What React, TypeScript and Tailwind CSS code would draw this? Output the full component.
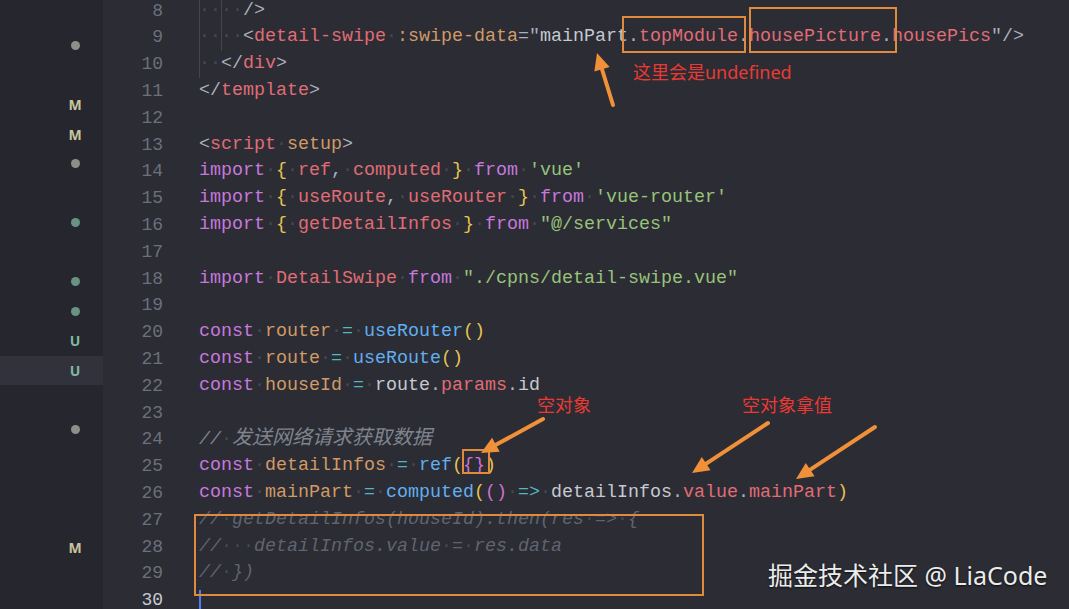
type Tok = [string, string];

const colors: Record<string, string> = {
  g: "text-[#a9afbb]",
  w: "text-[#c5c9d1]",
  r: "text-[#e06c75]",
  o: "text-[#d19a66]",
  k: "text-[#c678dd]",
  b: "text-[#61afef]",
  c: "text-[#56b6c2]",
  s: "text-[#98c379]",
  y: "text-[#e5c451]",
  m: "text-[#d070d0]",
  cm: "text-[#7f848e] italic",
  cd: "text-[#60646f] italic",
  zh: "text-[#7f848e] italic text-[20px]",
};

const code: Tok[][] = [
  [["IND", ""], ["IND", ""], ["/>", "g"]],
  [["IND", ""], ["IND", ""], ["<", "g"], ["detail-swipe", "r"], [" ", ""], [":swipe-data", "o"], ["=\"", "g"], ["mainPart", "w"], [".", "g"], ["topModule", "r"], [".", "g"], ["housePicture", "r"], [".", "g"], ["housePics", "r"], ["\"/>", "g"]],
  [["IND", ""], ["</", "g"], ["div", "r"], [">", "g"]],
  [["</", "g"], ["template", "r"], [">", "g"]],
  [],
  [["<", "g"], ["script", "r"], [" ", ""], ["setup", "o"], [">", "g"]],
  [["import", "k"], [" ", ""], ["{", "y"], [" ", ""], ["ref", "r"], [",", "g"], [" ", ""], ["computed", "r"], [" ", ""], ["}", "y"], [" ", ""], ["from", "k"], [" ", ""], ["'vue'", "s"]],
  [["import", "k"], [" ", ""], ["{", "y"], [" ", ""], ["useRoute", "r"], [",", "g"], [" ", ""], ["useRouter", "r"], [" ", ""], ["}", "y"], [" ", ""], ["from", "k"], [" ", ""], ["'vue-router'", "s"]],
  [["import", "k"], [" ", ""], ["{", "y"], [" ", ""], ["getDetailInfos", "r"], [" ", ""], ["}", "y"], [" ", ""], ["from", "k"], [" ", ""], ["\"@/services\"", "s"]],
  [],
  [["import", "k"], [" ", ""], ["DetailSwipe", "r"], [" ", ""], ["from", "k"], [" ", ""], ["\"./cpns/detail-swipe.vue\"", "s"]],
  [],
  [["const", "k"], [" ", ""], ["router", "o"], [" ", ""], ["=", "c"], [" ", ""], ["useRouter", "b"], ["()", "y"]],
  [["const", "k"], [" ", ""], ["route", "o"], [" ", ""], ["=", "c"], [" ", ""], ["useRoute", "b"], ["()", "y"]],
  [["const", "k"], [" ", ""], ["houseId", "o"], [" ", ""], ["=", "c"], [" ", ""], ["route", "w"], [".", "g"], ["params", "r"], [".", "g"], ["id", "w"]],
  [],
  [["//", "cm"], [" ", ""], ["发送网络请求获取数据", "zh"]],
  [["const", "k"], [" ", ""], ["detailInfos", "o"], [" ", ""], ["=", "c"], [" ", ""], ["ref", "b"], ["(", "y"], ["{}", "m"], [")", "y"]],
  [["const", "k"], [" ", ""], ["mainPart", "o"], [" ", ""], ["=", "c"], [" ", ""], ["computed", "b"], ["(", "y"], ["()", "m"], [" ", ""], ["=>", "c"], [" ", ""], ["detailInfos", "w"], [".", "g"], ["value", "r"], [".", "g"], ["mainPart", "r"], [")", "y"]],
  [["//", "cd"], [" ", ""], ["getDetailInfos(houseId).then(res", "cd"], [" ", ""], ["=>", "cd"], [" ", ""], ["{", "cd"]],
  [["//", "cd"], ["   ", ""], ["detailInfos.value", "cd"], [" ", ""], ["=", "cd"], [" ", ""], ["res.data", "cd"]],
  [["//", "cd"], [" ", ""], ["})", "cd"]],
  [],
];

const side: (null | "dot" | "gdot" | "M" | "U")[] = [
  "dot", null, "M", "M", "dot", null, "gdot", null, "gdot", "gdot", "U", "U", null, "dot", null, null, null, "M",
];

function Token({ t }: { t: Tok }) {
  if (t[0] === "IND") {
    return (
      <span className="inline-block w-[22px] shadow-[inset_1px_0_0_#42454f] text-[#464953]">··</span>
    );
  }
  if (t[1] === "") {
    return <span className="text-[#464953]">{"·".repeat(t[0].length)}</span>;
  }
  return <span className={colors[t[1]]}>{t[0]}</span>;
}

function Arrow({ x1, y1, x2, y2 }: { x1: number; y1: number; x2: number; y2: number }) {
  const len = Math.hypot(x2 - x1, y2 - y1);
  const dx = (x2 - x1) / len;
  const dy = (y2 - y1) / len;
  const bx = x2 - dx * 17;
  const by = y2 - dy * 17;
  const px = -dy * 8;
  const py = dx * 8;
  return (
    <g>
      <line x1={x1} y1={y1} x2={bx} y2={by} stroke="#f0913a" strokeWidth={4} strokeLinecap="round" />
      <polygon points={`${x2},${y2} ${bx + px},${by + py} ${bx - px},${by - py}`} fill="#f0913a" />
    </g>
  );
}

export default function App() {
  return (
    <div className="relative w-[1069px] h-[609px] overflow-hidden bg-[#2b2c34] flex font-['Liberation_Mono','Noto_Sans_CJK_SC',monospace]">
      {/* explorer strip */}
      <div className="w-[103px] shrink-0 h-full bg-[#25262e] pt-[31px] font-['Noto_Sans',sans-serif]">
        {side.map((s, i) => (
          <div
            key={i}
            className={`h-[29.5px] flex items-center justify-end pr-[20px] ${i === 11 ? "bg-[#31323c]" : ""}`}
          >
            <div className="w-4 flex justify-center">
              {s === "dot" && <span className="w-[9px] h-[9px] rounded-full bg-[#8f8e86]" />}
              {s === "gdot" && <span className="w-[9px] h-[9px] rounded-full bg-[#6a9283]" />}
              {s === "M" && <span className="text-[14px] font-bold text-[#c9c39c]">M</span>}
              {s === "U" && <span className="text-[14px] font-bold text-[#7fb8a1]">U</span>}
            </div>
          </div>
        ))}
      </div>

      {/* gutter */}
      <div className="w-[96px] shrink-0 mt-[-2.4px] pr-[36px] text-right text-[18px] leading-[26.8px] text-[#6c707b]">
        {code.map((_, i) => (
          <div key={i} className={i + 8 === 30 ? "text-[#c8cad0]" : ""}>
            {i + 8}
          </div>
        ))}
      </div>

      {/* code */}
      <div className="flex-1 mt-[-2.4px] text-[18.33px] leading-[26.8px] whitespace-pre">
        {code.map((line, i) => (
          <div key={i} className="relative h-[26.8px]">
            {line.map((t, j) => (
              <Token key={j} t={t} />
            ))}
            {i === 22 && <span className="absolute left-0 top-[3px] w-[2px] h-[24px] bg-[#4f7ef0]" />}
          </div>
        ))}
      </div>

      {/* annotations */}
      <div className="absolute left-[622px] top-[16px] w-[124px] h-[37px] border-2 border-[#e08a3e]" />
      <div className="absolute left-[749px] top-[7px] w-[148px] h-[46px] border-2 border-[#e08a3e]" />
      <div className="absolute left-[462px] top-[449px] w-[28px] h-[25px] border-2 border-[#e08a3e]" />
      <div className="absolute left-[194px] top-[514px] w-[510px] h-[82px] border-2 border-[#e08a3e]" />

      <div className="absolute left-[633px] top-[59px] text-[18px] leading-[26px] text-[#ea3a33] font-['Noto_Sans','Noto_Sans_CJK_SC',sans-serif]">
        这里会是undefined
      </div>
      <div className="absolute left-[537px] top-[392px] text-[18px] leading-[26px] text-[#ea3a33] font-['Noto_Sans','Noto_Sans_CJK_SC',sans-serif]">
        空对象
      </div>
      <div className="absolute left-[742px] top-[392px] text-[18px] leading-[26px] text-[#ea3a33] font-['Noto_Sans','Noto_Sans_CJK_SC',sans-serif]">
        空对象拿值
      </div>

      <svg className="absolute inset-0 pointer-events-none" width={1069} height={609}>
        <Arrow x1={613} y1={105} x2={597} y2={53} />
        <Arrow x1={543} y1={419} x2={481} y2={453} />
        <Arrow x1={768} y1={423} x2={692} y2={473} />
        <Arrow x1={875} y1={427} x2={796} y2={479} />
      </svg>

      <div className="absolute left-[768px] top-[558px] text-[25px] leading-[34px] text-[#ececec] font-['Noto_Sans','Noto_Sans_CJK_SC',sans-serif] [text-shadow:0_1px_2px_rgba(0,0,0,0.7)]">
        掘金技术社区 @ LiaCode
      </div>
    </div>
  );
}
